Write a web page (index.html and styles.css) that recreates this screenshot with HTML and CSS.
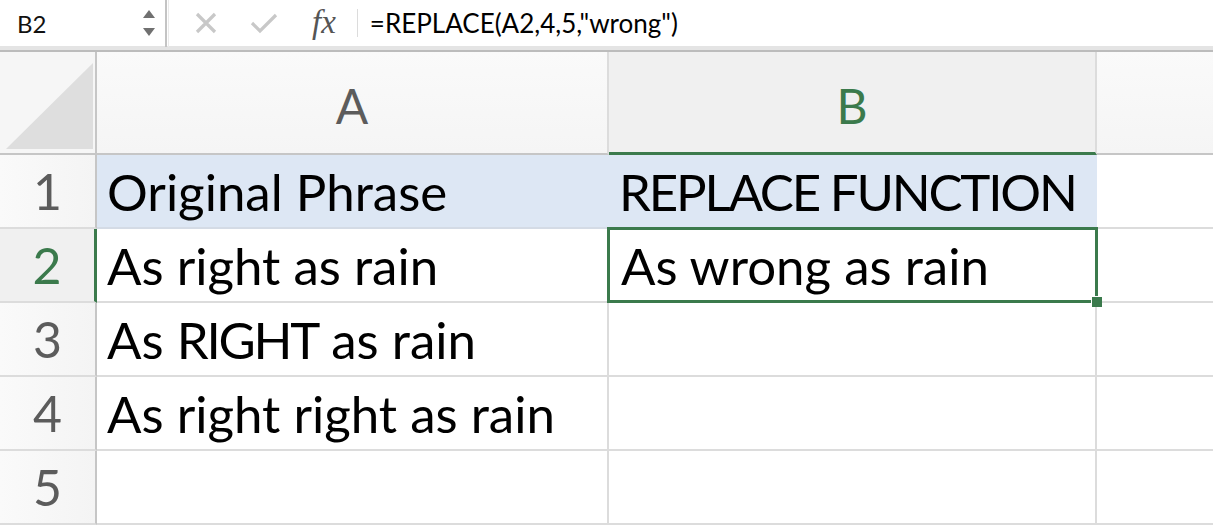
FILE: index.html
```html
<!DOCTYPE html>
<html>
<head>
<meta charset="utf-8">
<link rel="stylesheet" href="styles.css">
</head>
<body>
<div class="app">
  <div class="formula-bar">
    <div class="name-box">
      <span class="name">B2</span>
      <span class="spinner">
        <svg width="14" height="30" viewBox="0 0 14 30"><path d="M7 2 L13 10 L1 10 Z" fill="#707070"/><path d="M1 20 L13 20 L7 28 Z" fill="#707070"/></svg>
      </span>
    </div>
    <div class="bar-sep"></div>
    <div class="bar-buttons">
      <svg class="btn-x" width="22" height="22" viewBox="0 0 22 22"><path d="M2 2 L20 20 M20 2 L2 20" stroke="#c8c8c8" stroke-width="3.2"/></svg>
      <svg class="btn-ok" width="28" height="22" viewBox="0 0 28 22"><path d="M2 11 L10 19 L26 3" stroke="#c8c8c8" stroke-width="3.2" fill="none"/></svg>
      <span class="fx">fx</span>
    </div>
    <div class="fx-sep"></div>
    <div class="formula">=REPLACE(A2,4,5,"wrong")</div>
  </div>
  <div class="sheet">
    <div class="corner">
      <svg width="97" height="101" viewBox="0 0 97 101"><path d="M6 97 L93 97 L93 11 Z" fill="#dedede"/></svg>
    </div>
    <div class="col-head">A</div>
    <div class="col-head active">B</div>
    <div class="col-head last"></div>

    <div class="row-head">1</div>
    <div class="cell hl">Original Phrase</div>
    <div class="cell hl caps">REPLACE FUNCTION</div>
    <div class="cell last"></div>

    <div class="row-head active">2</div>
    <div class="cell">As right as rain</div>
    <div class="cell selected">As wrong as rain<span class="handle"></span></div>
    <div class="cell last"></div>

    <div class="row-head">3</div>
    <div class="cell">As&nbsp;<span class="caps">RIGHT</span>&nbsp;as rain</div>
    <div class="cell"></div>
    <div class="cell last"></div>

    <div class="row-head">4</div>
    <div class="cell">As right right as rain</div>
    <div class="cell"></div>
    <div class="cell last"></div>

    <div class="row-head">5</div>
    <div class="cell"></div>
    <div class="cell"></div>
    <div class="cell last"></div>
  </div>
</div>
</body>
</html>
```

FILE: styles.css
```css
* { box-sizing: border-box; }
html, body { margin: 0; padding: 0; background: #fff; overflow: hidden; }
body { font-family: "Lato", "Open Sans", sans-serif; width: 1213px; height: 529px; }

.formula-bar {
  height: 52px;
  display: flex;
  align-items: center;
  border-bottom: 2px solid #bcbcbc;
  box-shadow: inset 0 -4px 0 #e4e4e4;
  padding-bottom: 4px;
  background: #fff;
}
.name-box {
  width: 165px;
  height: 48px;
  display: flex;
  align-items: center;
  justify-content: space-between;
  padding: 0 9px 0 17px;
}
.name { font-size: 24px; color: #111; }
.spinner { display: flex; align-items: center; }
.bar-sep {
  width: 4px; height: 48px;
  border-left: 2px solid #c4c4c4;
  border-right: 1px solid #eaeaea;
}
.bar-buttons {
  display: flex;
  align-items: center;
  height: 48px;
  padding-left: 26px;
}
.btn-x { margin-right: 33px; }
.btn-ok { margin-right: 34px; }
.fx {
  font-family: "Liberation Serif", "DejaVu Serif", serif;
  font-style: italic;
  font-size: 33px;
  color: #555;
  position: relative;
  top: -1px;
}
.fx-sep {
  width: 1px; height: 28px;
  background: #dcdcdc;
  margin-left: 21px;
  margin-right: 12px;
}
.formula { font-size: 26px; color: #000; }

.sheet {
  display: grid;
  grid-template-columns: 97px 512px 488px 1fr;
  grid-template-rows: 103px repeat(5, 74px);
}
.corner {
  background: #f6f6f6;
  border-right: 2px solid #c6c6c6;
  border-bottom: 2px solid #c6c6c6;
}
.corner svg { display: block; }
.col-head {
  background: linear-gradient(#fafafa, #f5f5f5);
  border-right: 2px solid #dcdcdc;
  border-bottom: 2px solid #c6c6c6;
  display: flex;
  align-items: center;
  justify-content: center;
  font-size: 48px;
  color: #5c5c5c;
  padding-top: 6px;
}
.col-head.active {
  background: #f0f0f0;
  color: #3b7a4c;
  border-bottom: 3px solid #3b7a4c;
}
.col-head.last { border-right: none; }
.row-head {
  background: linear-gradient(90deg, #fafafa, #f4f4f4);
  border-right: 2px solid #c6c6c6;
  border-bottom: 2px solid #dcdcdc;
  display: flex;
  align-items: center;
  justify-content: center;
  font-size: 50px;
  color: #5c5c5c;
}
.row-head.active {
  background: #f0f0f0;
  color: #3b7a4c;
  border-right: 3px solid #3b7a4c;
}
.cell {
  position: relative;
  border-right: 2px solid #dcdcdc;
  border-bottom: 2px solid #dcdcdc;
  display: flex;
  align-items: center;
  padding-left: 10px;
  font-size: 51px;
  color: #000;
  white-space: nowrap;
}
.caps { letter-spacing: -2.2px; }
.cell.last { border-right: none; }
.cell.hl { background: #dde7f4; border-right-color: #dde7f4; border-bottom-color: #d4dbe5; }
.cell.selected {
  border: 3px solid #3b7a4c;
  margin: -2px -1px 0 -2px;
  padding-left: 11px;
  z-index: 2;
}
.handle {
  position: absolute;
  right: -7px;
  bottom: -7px;
  width: 11px;
  height: 11px;
  background: #3b7a4c;
  border-left: 1px solid #fff;
  border-top: 1px solid #fff;
}
```
